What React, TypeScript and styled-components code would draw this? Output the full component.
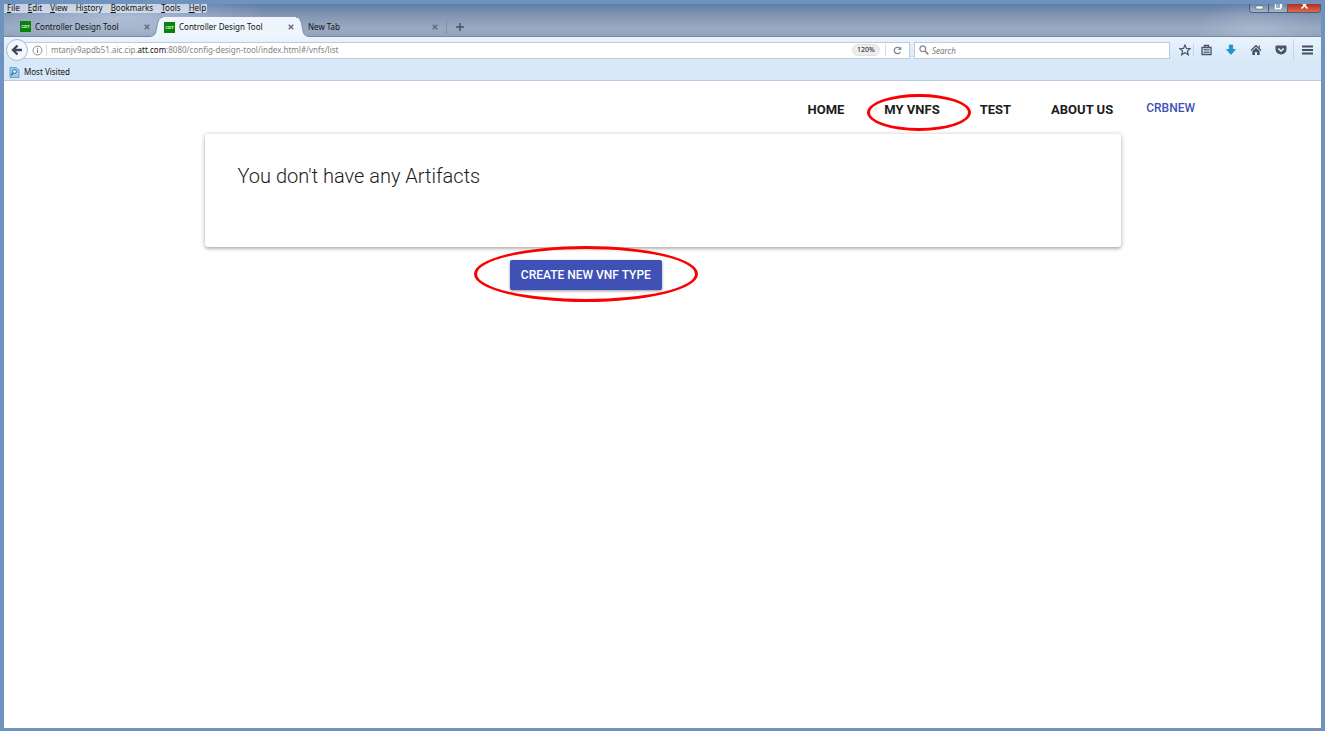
import React from "react";
import styled, { createGlobalStyle } from "styled-components";

const Global = createGlobalStyle`
  * { box-sizing: border-box; }
  body { margin: 0; background: #fff; }
  button, input { font: inherit; color: inherit; }
`;

const chromeFont = `"Noto Sans", "Open Sans", sans-serif`;
const accent = "#3f51b5";

const Frame = styled.div`
  min-height: 100vh;
  border: 4px solid #7092be;
  border-bottom-width: 3px;
  background: #fff;
  font-family: Roboto, sans-serif;
`;

const Chrome = styled.header`
  font-family: ${chromeFont};
  font-size: 8px;
  line-height: 12px;
  color: #111;
`;

const TitleArea = styled.div`
  display: flex;
  flex-direction: column;
  height: 33px;
  border-bottom: 1px solid #7689a4;
  background:
    radial-gradient(ellipse 150px 24px at 9% 40%, rgba(205, 220, 240, 0.55), transparent),
    radial-gradient(ellipse 60px 30px at 95% 80%, rgba(190, 205, 225, 0.4), transparent),
    linear-gradient(#607ea7, #8598b4 40%, #98a9c0 75%, #93a5bd);
`;

const TitleTop = styled.div`
  display: flex;
  justify-content: space-between;
  align-items: flex-start;
  height: 13px;
`;

const MenuBar = styled.nav`
  display: flex;
  align-items: flex-start;
  gap: 8px;
  height: 9px;
  padding: 0 1px 0 3px;
  border-radius: 0 0 3px 0;
  background: rgba(225, 232, 242, 0.75);
`;

const PlainButton = styled.button`
  display: inline-flex;
  align-items: center;
  justify-content: center;
  padding: 0;
  border: 0;
  background: none;
  cursor: pointer;
`;

const MenuItem = styled(PlainButton)`
  display: block;
  line-height: 7px;
  white-space: nowrap;
`;

const WindowButtons = styled.div`
  display: flex;
  height: 9px;
  border: 1px solid #4c5d78;
  border-top: 0;
  border-radius: 0 0 4px 4px;
  overflow: hidden;
`;

const WindowButton = styled(PlainButton)<{ $close?: boolean }>`
  width: ${(p) => (p.$close ? 32 : 19)}px;
  align-items: flex-start;
  background: ${(p) =>
    p.$close ? "linear-gradient(#b0301c, #dc6a4c)" : "linear-gradient(#6e84a4, #a5b5ca)"};
  border-right: ${(p) => (p.$close ? "0" : "1px solid #4c5d78")};
`;

const TabStrip = styled.div`
  display: flex;
  height: 19px;
  padding-left: 7px;
`;

const Tab = styled.div<{ $active?: boolean }>`
  position: relative;
  isolation: isolate;
  z-index: ${(p) => (p.$active ? 1 : 0)};
  display: flex;
  align-items: center;
  gap: 4px;
  flex: 0 1 144px;
  min-width: 0;
  height: ${(p) => (p.$active ? 20 : 19)}px;
  padding: 0 3px 0 9px;
`;

const TabFill = styled.span`
  position: absolute;
  z-index: -1;
  inset: 0 3px 0 8px;
  background: #eef5fc;
`;

const TabEdge = styled.svg<{ $right?: boolean }>`
  position: absolute;
  top: 0;
  z-index: -1;
  ${(p) => (p.$right ? "right: -9px; transform: scaleX(-1);" : "left: -4px;")}
`;

const Favicon = styled.span`
  flex: none;
  width: 11px;
  height: 11px;
  background: #0a820a;
  color: #fff;
  font: bold 4px/11px "Liberation Sans", sans-serif;
  text-align: center;
`;

const TabTitle = styled.button`
  flex: 1;
  min-width: 0;
  padding: 0;
  border: 0;
  background: none;
  text-align: left;
  white-space: nowrap;
  overflow: hidden;
`;

const TabClose = styled(PlainButton)`
  width: 10px;
  height: 10px;
`;

const NewTab = styled(PlainButton)`
  width: 26px;
  margin: 2px 0 2px 3px;
  border-left: 1px solid #8091aa;
`;

const Toolbars = styled.div`
  height: 44px;
  border-bottom: 1px solid #b9c9e2;
  background: linear-gradient(#e9f3fc, #d8e8f8 60%);
`;

const NavRow = styled.div`
  display: flex;
  align-items: center;
  height: 26px;
  padding-left: 2px;
`;

const BackButton = styled(PlainButton)`
  position: relative;
  flex: none;
  width: 22px;
  height: 22px;
  margin-right: -4px;
  border: 1px solid #a9b9d0;
  border-radius: 50%;
  background: #f3f8fd;
`;

const Field = styled.div`
  display: flex;
  align-items: center;
  flex: 877 1 0;
  min-width: 0;
  height: 17px;
  padding-left: 7px;
  border: 1px solid #bccbe0;
  background: #fff;
`;

const SearchField = styled(Field)`
  flex-grow: 250;
  margin-left: 4px;
  padding-left: 4px;
`;

const Address = styled.div`
  flex: 1;
  min-width: 0;
  margin-left: 3px;
  padding-left: 4px;
  border-left: 1px solid #dcdcdc;
  overflow: hidden;
  white-space: nowrap;
  color: #858585;
  outline: 0;
  b { font-weight: 400; color: #111; }
`;

const Zoom = styled(PlainButton)`
  width: 28px;
  height: 12px;
  margin-right: 5px;
  border: 1px solid #e0e0e0;
  border-radius: 6px;
  background: #eeeeee;
  font-size: 7px;
`;

const Reload = styled(PlainButton)`
  width: 24px;
  height: 12px;
  border-left: 1px solid #dcdcdc;
`;

const SearchInput = styled.input`
  flex: 1;
  min-width: 0;
  height: 13px;
  padding: 0;
  margin-left: 3px;
  border: 0;
  outline: 0;
  background: none;
  &::placeholder { color: #777; font-style: italic; opacity: 1; }
`;

const Tools = styled.div`
  display: flex;
  align-items: center;
  margin-left: 6px;
`;

const Tool = styled(PlainButton)<{ $w?: number; $divided?: "short" | "tall" }>`
  width: ${(p) => p.$w ?? 25}px;
  height: ${(p) => (p.$divided === "tall" ? 22 : 12)}px;
  border-left: ${(p) => (p.$divided ? "1px solid #c8d5e6" : "0")};
`;

const BookmarkRow = styled.div`
  display: flex;
  align-items: center;
  height: 18px;
  padding-left: 5px;
`;

const Bookmark = styled(PlainButton)`
  gap: 4px;
`;

const SiteNav = styled.nav`
  display: flex;
  align-items: flex-start;
  justify-content: flex-end;
  gap: 40px;
  height: 53px;
  padding: 19px 126px 0 0;
  line-height: 20px;
`;

const NavLink = styled.a`
  position: relative;
  color: #1c1c1c;
  font-size: 13px;
  font-weight: 700;
  text-decoration: none;
  white-space: nowrap;
`;

const UserLink = styled.a`
  margin-left: -7px;
  color: ${accent};
  font-size: 12px;
  font-weight: 500;
  line-height: 16px;
  text-decoration: none;
`;

const Ring = styled.span<{ $top: number; $side: number; $bottom: number; $end: number }>`
  position: absolute;
  top: -${(p) => p.$top}px;
  right: -${(p) => p.$end}px;
  bottom: -${(p) => p.$bottom}px;
  left: -${(p) => p.$side}px;
  border: 3px solid #fb0000;
  border-radius: 50%;
  pointer-events: none;
`;

const Content = styled.main`
  max-width: 916px;
  margin: 0 auto;
`;

const Card = styled.section`
  min-height: 113px;
  padding: 28px 33px;
  border-radius: 3px;
  box-shadow: 0 1px 5px rgba(0, 0, 0, 0.3), 0 2px 2px rgba(0, 0, 0, 0.1);
`;

const Message = styled.h1`
  margin: 0;
  color: #1c1c1c;
  font-size: 20px;
  font-weight: 300;
  line-height: 28px;
`;

const Action = styled.div`
  position: relative;
  width: max-content;
  margin: 13px 0 0 33.33%;
`;

const CreateButton = styled.button`
  display: block;
  height: 30px;
  padding: 0 11px;
  border: 0;
  border-radius: 2px;
  background: ${accent};
  color: #fff;
  font-size: 12px;
  font-weight: 500;
  box-shadow: 0 1px 3px rgba(0, 0, 0, 0.4);
  cursor: pointer;
`;

const menus = [
  ["", "F", "ile"],
  ["", "E", "dit"],
  ["", "V", "iew"],
  ["Hi", "s", "tory"],
  ["", "B", "ookmarks"],
  ["", "T", "ools"],
  ["", "H", "elp"],
];

const tabs = [
  { title: "Controller Design Tool", icon: true, active: false },
  { title: "Controller Design Tool", icon: true, active: true },
  { title: "New Tab", icon: false, active: false },
];

const Edge = ({ right }: { right?: boolean }) => (
  <TabEdge $right={right} width="12" height="20" viewBox="0 0 12 20" aria-hidden="true">
    <path d="M12 0C8 0 7 4 6 9C5 14 5 19 0 19V20H12Z" fill="#eef5fc" />
    <path d="M12 .4C8 .4 7 4 6 9C5 14 5 19 0 19.300" fill="none" stroke="#6d809c" strokeWidth=".8" />
  </TabEdge>
);

const Cross = () => (
  <svg width="6" height="6" viewBox="0 0 6 6" aria-hidden="true">
    <path d="M.7 .7L5.300 5.300M5.300 .7L.7 5.300" stroke="#5f6c7e" strokeWidth="1.400" />
  </svg>
);

export default function App() {
  return (
    <>
      <Global />
      <Frame>
        <Chrome>
          <TitleArea>
            <TitleTop>
              <MenuBar aria-label="Menu">
                {menus.map(([a, k, b]) => (
                  <MenuItem key={k + b}>{a}<u>{k}</u>{b}</MenuItem>
                ))}
              </MenuBar>
              <WindowButtons>
                <WindowButton aria-label="Minimize">
                  <svg width="9" height="6"><rect x="1" y="2" width="7" height="3" fill="#fff" stroke="#46566e" strokeWidth=".5" /></svg>
                </WindowButton>
                <WindowButton aria-label="Restore">
                  <svg width="9" height="6"><path d="M1.500 0V4.500H6.500V0M6.500 3H7.500V0M3.500 1.500H4.500" fill="none" stroke="#fff" strokeWidth="1.300" /></svg>
                </WindowButton>
                <WindowButton $close aria-label="Close">
                  <svg width="9" height="6"><path d="M1.500 4.500L4.500 1.500L7.500 4.500M3 0L4.500 1.500L6 0" fill="none" stroke="#fff" strokeWidth="1.700" /></svg>
                </WindowButton>
              </WindowButtons>
            </TitleTop>
            <TabStrip>
              {tabs.map((t, i) => (
                <Tab key={i} $active={t.active}>
                  {t.active && (
                    <>
                      <TabFill />
                      <Edge />
                      <Edge right />
                    </>
                  )}
                  {t.icon && <Favicon>CDT</Favicon>}
                  <TabTitle>{t.title}</TabTitle>
                  <TabClose aria-label="Close tab"><Cross /></TabClose>
                </Tab>
              ))}
              <NewTab aria-label="New tab">
                <svg width="8" height="8"><path d="M4 0V8M0 4H8" stroke="#46536a" strokeWidth="1.500" /></svg>
              </NewTab>
            </TabStrip>
          </TitleArea>
          <Toolbars>
            <NavRow>
              <BackButton aria-label="Back">
                <svg width="12" height="12" viewBox="0 0 12 12"><path d="M6.500 1.500L2 6L6.500 10.500M2.500 6H11" fill="none" stroke="#3e4a5a" strokeWidth="2.400" /></svg>
              </BackButton>
              <Field>
                <svg width="11" height="11" viewBox="0 0 11 11" aria-hidden="true">
                  <circle cx="5.500" cy="5.500" r="4.500" fill="none" stroke="#808080" strokeWidth=".9" />
                  <path d="M5.500 4.800V8M5.500 2.800V3.900" stroke="#808080" strokeWidth="1.100" />
                </svg>
                <Address role="textbox" aria-label="Address" contentEditable suppressContentEditableWarning spellCheck={false}>
                  mtanjv9apdb51.aic.cip.<b>att.com</b>:8080/config-design-tool/index.html#/vnfs/list
                </Address>
                <Zoom>120%</Zoom>
                <Reload aria-label="Reload">
                  <svg width="9" height="9" viewBox="0 0 9 9"><path d="M6.800 2.300A3.200 3.200 0 1 0 7.300 6" fill="none" stroke="#7d8896" strokeWidth="1.300" /><path d="M8.300 .5V4H4.800Z" fill="#7d8896" /></svg>
                </Reload>
              </Field>
              <SearchField as="label">
                <svg width="10" height="10" viewBox="0 0 10 10" aria-hidden="true"><circle cx="3.800" cy="3.800" r="2.900" fill="none" stroke="#858585" strokeWidth="1.300" /><path d="M6 6L9.300 9.300" stroke="#858585" strokeWidth="1.700" /></svg>
                <SearchInput aria-label="Search" placeholder="Search" />
              </SearchField>
              <Tools>
                <Tool $w={17} aria-label="Bookmark this page">
                  <svg width="12" height="12" viewBox="0 0 12 12"><path d="M6 1L7.500 4.400L11.200 4.700L8.400 7.100L9.300 10.800L6 8.800L2.700 10.800L3.600 7.100L.8 4.700L4.500 4.400Z" fill="none" stroke="#4a5565" strokeWidth="1.200" /></svg>
                </Tool>
                <Tool $divided="short" aria-label="Bookmarks">
                  <svg width="11" height="12" viewBox="0 0 11 12"><path d="M1 3.500H10V10.500H1ZM3.500 3.500V1.500H7.500V3.500" fill="none" stroke="#4a5565" strokeWidth="1.300" /><path d="M2.500 5.500H8.500M2.500 7H8.500M2.500 8.500H8.500" stroke="#4a5565" strokeWidth=".8" /></svg>
                </Tool>
                <Tool aria-label="Downloads">
                  <svg width="10" height="12" viewBox="0 0 10 12"><path d="M3.300 1H6.700V5.500H9.500L5 10.500L.5 5.500H3.300Z" fill="#1b95d4" stroke="#1a78b2" strokeWidth=".6" /></svg>
                </Tool>
                <Tool aria-label="Home">
                  <svg width="12" height="12" viewBox="0 0 12 12"><path d="M6 .8L11.500 6L10.700 7L6 2.800L1.300 7L.5 6ZM8.700 1.500H10V4L8.700 3Z" fill="#4a5565" /><path d="M2.300 7L6 3.700L9.700 7V11H7V8H5V11H2.300Z" fill="#4a5565" /></svg>
                </Tool>
                <Tool aria-label="Pocket">
                  <svg width="12" height="12" viewBox="0 0 12 12"><path d="M1.500 1.500H10.500Q11.500 1.500 11.500 2.500V5.500A5.500 5 0 0 1 .5 5.500V2.500Q.5 1.500 1.500 1.500Z" fill="#4a5565" /><path d="M3.300 4.500L6 7L8.700 4.500" fill="none" stroke="#fff" strokeWidth="1.400" /></svg>
                </Tool>
                <Tool $w={28} $divided="tall" aria-label="Open menu">
                  <svg width="11" height="10"><path d="M0 1.500H11M0 5H11M0 8.500H11" stroke="#46505f" strokeWidth="2" /></svg>
                </Tool>
              </Tools>
            </NavRow>
            <BookmarkRow>
              <Bookmark>
                <svg width="11" height="11" viewBox="0 0 11 11" aria-hidden="true"><path d="M1 .5H7L10 3V10.500H1Z" fill="#9dcbe8" stroke="#5a93bd" strokeWidth=".8" /><circle cx="5.500" cy="4.500" r="2" fill="#d8eefa" stroke="#2f6f9f" /><path d="M4 6L2 8.500" stroke="#2f6f9f" strokeWidth="1.300" /></svg>
                Most Visited
              </Bookmark>
            </BookmarkRow>
          </Toolbars>
        </Chrome>
        <SiteNav>
          <NavLink href="#home">HOME</NavLink>
          <NavLink href="#vnfs">MY VNFS<Ring $top={6} $side={17} $bottom={11} $end={31} /></NavLink>
          <NavLink href="#test">TEST</NavLink>
          <NavLink href="#about">ABOUT US</NavLink>
          <UserLink href="#user">CRBNEW</UserLink>
        </SiteNav>
        <Content>
          <Card>
            <Message>You don't have any Artifacts</Message>
          </Card>
          <Action>
            <CreateButton>CREATE NEW VNF TYPE</CreateButton>
            <Ring $top={14} $side={36} $bottom={12} $end={36} />
          </Action>
        </Content>
      </Frame>
    </>
  );
}
